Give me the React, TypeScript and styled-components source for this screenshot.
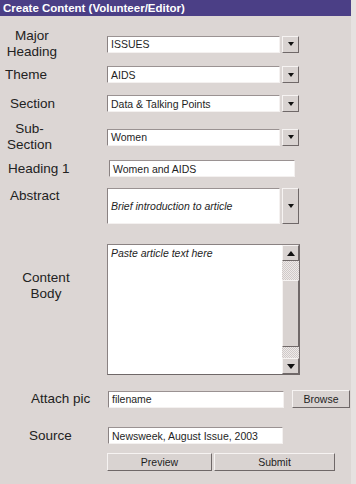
import React from "react";
import styled, { createGlobalStyle } from "styled-components";

const GlobalStyle = createGlobalStyle`
  html, body {
    margin: 0;
    padding: 0;
    background: #e6e1e0;
    font-family: "Liberation Sans", Arial, sans-serif;
  }
`;

const Panel = styled.div`
  width: 351px;
  height: 484px;
  background: #dcd6d4;
  overflow: hidden;
`;

const TitleBar = styled.div`
  height: 16px;
  background: #4b3f86;
  color: #ffffff;
  font-size: 11.5px;
  font-weight: bold;
  line-height: 16px;
  padding-left: 3px;
  white-space: nowrap;
`;

const Form = styled.div`
  display: flex;
  flex-direction: column;
`;

const Row = styled.div<{ $mt: number; $top?: boolean }>`
  display: grid;
  grid-template-columns: 107px 1fr;
  align-items: ${p => (p.$top ? "start" : "center")};
  margin-top: ${p => p.$mt}px;
`;

const Label = styled.div<{ $indent?: number; $center?: number; $pt?: number }>`
  font-size: 13.5px;
  line-height: 16px;
  color: #222;
  padding-left: ${p => p.$indent ?? 0}px;
  padding-top: ${p => p.$pt ?? 0}px;
  width: ${p => (p.$center ? `${p.$center}px` : "auto")};
  text-align: ${p => (p.$center ? "center" : "left")};
`;

const SelectBox = styled.div<{ $h?: number }>`
  display: flex;
  align-items: stretch;
  gap: 2px;
  width: 192px;
  height: ${p => p.$h ?? 17}px;
`;

const WhiteField = styled.div<{ $w?: number; $italic?: boolean }>`
  box-sizing: border-box;
  flex: ${p => (p.$w ? "none" : "1")};
  width: ${p => (p.$w ? `${p.$w}px` : "auto")};
  height: 17px;
  background: #ffffff;
  border-top: 1px solid #9a9292;
  border-left: 1px solid #8a8282;
  border-right: 1px solid #f4f1f0;
  border-bottom: 1px solid #f4f1f0;
  font-size: 10.5px;
  font-style: ${p => (p.$italic ? "italic" : "normal")};
  color: #1e1e1e;
  padding-left: 3px;
  display: flex;
  align-items: center;
  white-space: nowrap;
`;

const TallField = styled(WhiteField)`
  height: auto;
`;

const DropButton = styled.div`
  box-sizing: border-box;
  width: 17px;
  background: #d9d3d1;
  border-top: 1px solid #f6f3f2;
  border-left: 1px solid #f6f3f2;
  border-right: 1px solid #6f6868;
  border-bottom: 1px solid #6f6868;
  display: flex;
  align-items: center;
  justify-content: center;
`;

const Arrow = styled.span<{ $up?: boolean; $size?: number }>`
  width: 0;
  height: 0;
  border-left: ${p => p.$size ?? 3}px solid transparent;
  border-right: ${p => p.$size ?? 3}px solid transparent;
  ${p =>
    p.$up
      ? `border-bottom: ${(p.$size ?? 3) + 1}px solid #111;`
      : `border-top: ${(p.$size ?? 3) + 1}px solid #111;`}
`;

const TextArea = styled.div`
  box-sizing: border-box;
  width: 193px;
  height: 131px;
  background: #ffffff;
  border-top: 1px solid #8a8282;
  border-left: 1px solid #8a8282;
  border-right: 1px solid #6f6868;
  border-bottom: 1px solid #6f6868;
  display: flex;
`;

const AreaText = styled.div`
  flex: 1;
  font-size: 10.5px;
  font-style: italic;
  color: #1e1e1e;
  padding: 2px 0 0 3px;
`;

const ScrollBar = styled.div`
  width: 17px;
  display: flex;
  flex-direction: column;
`;

const ScrollButton = styled(DropButton)`
  width: 17px;
  height: 16px;
  flex: none;
`;

const Track = styled.div<{ $h: number }>`
  height: ${p => p.$h}px;
  flex: none;
  background-color: #e4e0df;
  background-image: repeating-conic-gradient(#cfc9c8 0% 25%, #eeeae9 0% 50%);
  background-size: 2px 2px;
`;

const Thumb = styled(DropButton)`
  flex: 1;
`;

const Button = styled.div<{ $w: number }>`
  box-sizing: border-box;
  width: ${p => p.$w}px;
  height: 18px;
  background: #d9d3d1;
  border-top: 1px solid #f6f3f2;
  border-left: 1px solid #f6f3f2;
  border-right: 1px solid #6f6868;
  border-bottom: 1px solid #6f6868;
  font-size: 10.5px;
  color: #1e1e1e;
  display: flex;
  align-items: center;
  justify-content: center;
`;

const FieldLine = styled.div<{ $gap?: number; $pl?: number }>`
  display: flex;
  align-items: center;
  gap: ${p => p.$gap ?? 0}px;
  padding-left: ${p => p.$pl ?? 0}px;
`;

const Select = ({ value }: { value: string }) => (
  <SelectBox>
    <WhiteField>{value}</WhiteField>
    <DropButton>
      <Arrow />
    </DropButton>
  </SelectBox>
);

export default function App() {
  return (
    <Panel>
      <GlobalStyle />
      <TitleBar>Create Content (Volunteer/Editor)</TitleBar>
      <Form>
        <Row $mt={12}>
          <Label $center={64}>
            Major
            <br />
            Heading
          </Label>
          <Select value="ISSUES" />
        </Row>
        <Row $mt={6}>
          <Label $indent={5}>Theme</Label>
          <Select value="AIDS" />
        </Row>
        <Row $mt={12}>
          <Label $indent={10}>Section</Label>
          <Select value="Data & Talking Points" />
        </Row>
        <Row $mt={9}>
          <Label $center={59}>
            Sub-
            <br />
            Section
          </Label>
          <Select value="Women" />
        </Row>
        <Row $mt={7}>
          <Label $indent={8}>Heading 1</Label>
          <FieldLine $pl={2}>
            <WhiteField $w={186}>Women and AIDS</WhiteField>
          </FieldLine>
        </Row>
        <Row $mt={11} $top>
          <Label $indent={10}>Abstract</Label>
          <SelectBox $h={36}>
            <TallField $italic>Brief introduction to article</TallField>
            <DropButton>
              <Arrow />
            </DropButton>
          </SelectBox>
        </Row>
        <Row $mt={20} $top>
          <Label $center={92} $pt={26}>
            Content
            <br />
            Body
          </Label>
          <TextArea>
            <AreaText>Paste article text here</AreaText>
            <ScrollBar>
              <ScrollButton>
                <Arrow $up $size={4} />
              </ScrollButton>
              <Track $h={19} />
              <Thumb />
              <Track $h={11} />
              <ScrollButton>
                <Arrow $size={4} />
              </ScrollButton>
            </ScrollBar>
          </TextArea>
        </Row>
        <Row $mt={15}>
          <Label $indent={31}>Attach pic</Label>
          <FieldLine $gap={8} $pl={1}>
            <WhiteField $w={176}>filename</WhiteField>
            <Button $w={58}>Browse</Button>
          </FieldLine>
        </Row>
        <Row $mt={19}>
          <Label $indent={29}>Source</Label>
          <FieldLine $pl={1}>
            <WhiteField $w={175}>Newsweek, August Issue, 2003</WhiteField>
          </FieldLine>
        </Row>
        <Row $mt={9}>
          <span />
          <FieldLine $gap={2} $pl={0}>
            <Button $w={105}>Preview</Button>
            <Button $w={121}>Submit</Button>
          </FieldLine>
        </Row>
      </Form>
    </Panel>
  );
}
